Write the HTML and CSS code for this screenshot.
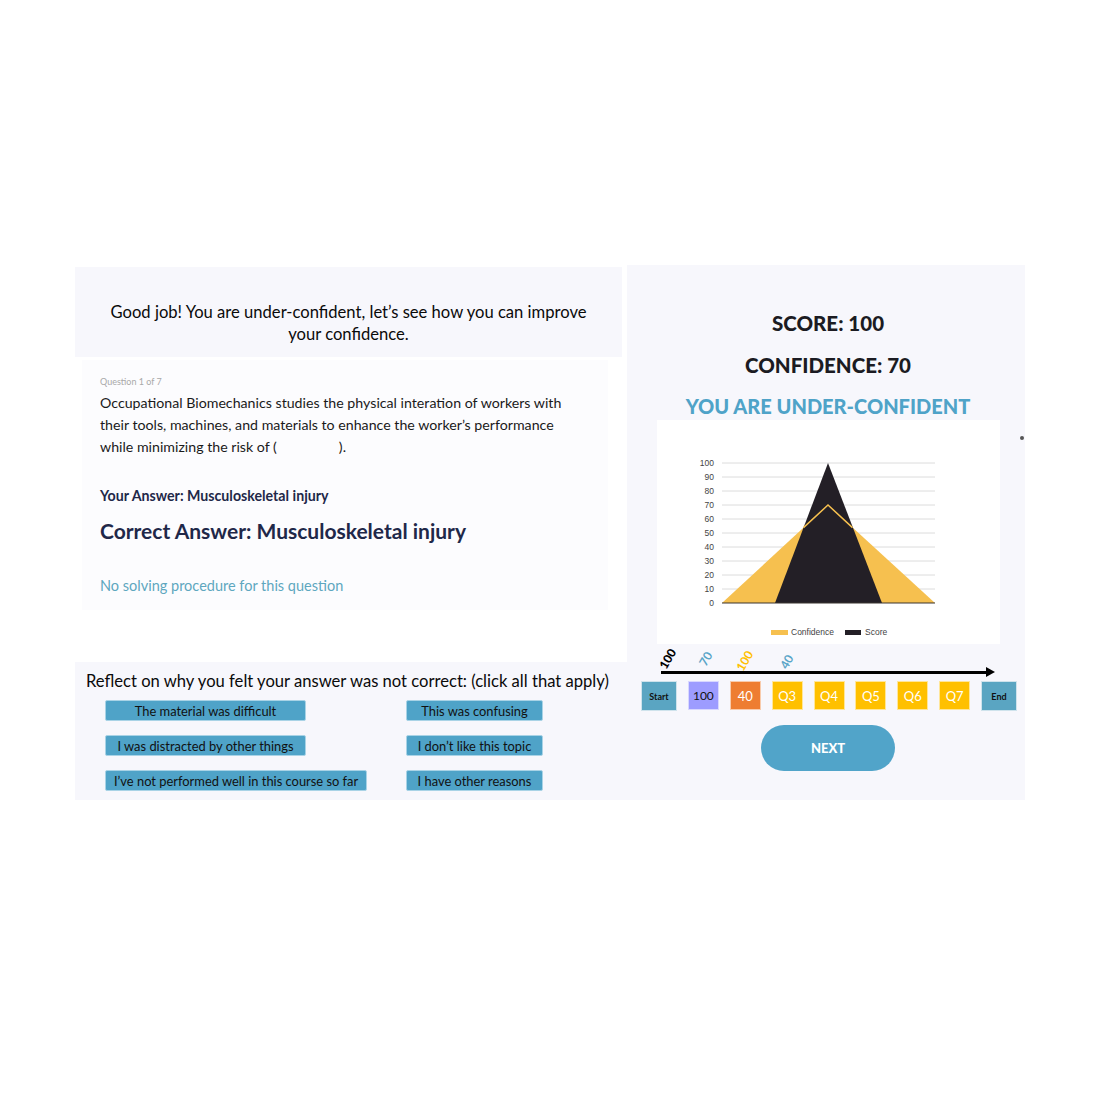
FILE: index.html
```html
<!DOCTYPE html>
<html>
<head>
<meta charset="utf-8">
<link rel="stylesheet" href="styles.css">
</head>
<body>
<div class="stage">
  <div class="left">
    <div class="banner">Good job! You are under-confident, let’s see how you can improve<br>your confidence.</div>
    <div class="qarea">
      <div class="qcard">
        <div class="qnum">Question 1 of 7</div>
        <p class="qtext">Occupational Biomechanics studies the physical interation of workers with<br>their tools, machines, and materials to enhance the worker’s performance<br>while minimizing the risk of (<span class="blank"></span>).</p>
        <div class="your">Your Answer: Musculoskeletal injury</div>
        <div class="correct">Correct Answer: Musculoskeletal injury</div>
        <div class="nosolve">No solving procedure for this question</div>
      </div>
    </div>
    <div class="reflect">
      <div class="reflect-title">Reflect on why you felt your answer was not correct: (click all that apply)</div>
      <div class="reasons">
        <button class="reason c1">The material was difficult</button>
        <button class="reason c2">This was confusing</button>
        <button class="reason c1">I was distracted by other things</button>
        <button class="reason c2">I don’t like this topic</button>
        <button class="reason c1">I’ve not performed well in this course so far</button>
        <button class="reason c2">I have other reasons</button>
      </div>
    </div>
  </div>
  <div class="right">
    <span class="dot"></span>
    <div class="stat">SCORE: 100</div>
    <div class="stat conf">CONFIDENCE: 70</div>
    <div class="verdict">YOU ARE UNDER-CONFIDENT</div>
    <div class="chart">
      <svg width="343" height="224" viewBox="0 0 343 224">
        <g stroke="#dcdcdc" stroke-width="1">
          <line x1="65" y1="43" x2="278" y2="43"/>
          <line x1="65" y1="57" x2="278" y2="57"/>
          <line x1="65" y1="71" x2="278" y2="71"/>
          <line x1="65" y1="85" x2="278" y2="85"/>
          <line x1="65" y1="99" x2="278" y2="99"/>
          <line x1="65" y1="113" x2="278" y2="113"/>
          <line x1="65" y1="127" x2="278" y2="127"/>
          <line x1="65" y1="141" x2="278" y2="141"/>
          <line x1="65" y1="155" x2="278" y2="155"/>
          <line x1="65" y1="169" x2="278" y2="169"/>
        </g>
        <g class="axis" text-anchor="end">
          <text x="57" y="46">100</text>
          <text x="57" y="60">90</text>
          <text x="57" y="74">80</text>
          <text x="57" y="88">70</text>
          <text x="57" y="102">60</text>
          <text x="57" y="116">50</text>
          <text x="57" y="130">40</text>
          <text x="57" y="144">30</text>
          <text x="57" y="158">20</text>
          <text x="57" y="172">10</text>
          <text x="57" y="186">0</text>
        </g>
        <polygon points="65,183 171,85 278,183" fill="#f6c04f"/>
        <polygon points="118,183 171,43 225,183" fill="#231f26"/>
        <polyline points="146.5,107.6 171,85 195.5,107.6" fill="none" stroke="#f6c04f" stroke-width="1.5"/>
        <line x1="65" y1="183" x2="278" y2="183" stroke="#3a3530" stroke-width="1.2"/>
        <rect x="114" y="210" width="17" height="5" fill="#f6c04f"/>
        <text class="legend" x="134" y="215">Confidence</text>
        <rect x="188" y="210" width="16" height="5" fill="#231f26"/>
        <text class="legend" x="208" y="215">Score</text>
      </svg>
    </div>
    <div class="timeline">
      <span class="tl-label bold" style="left:27px;top:15px">100</span>
      <span class="tl-label blue" style="left:65px;top:15px">70</span>
      <span class="tl-label yellow" style="left:104px;top:17px">100</span>
      <span class="tl-label blue" style="left:146px;top:18px">40</span>
      <div class="arrow"></div>
      <div class="steps">
        <div class="step edge">Start</div>
        <div class="step lav">100</div>
        <div class="step orange">40</div>
        <div class="step gold">Q3</div>
        <div class="step gold">Q4</div>
        <div class="step gold">Q5</div>
        <div class="step gold">Q6</div>
        <div class="step gold">Q7</div>
        <div class="step edge">End</div>
      </div>
    </div>
    <button class="next">NEXT</button>
  </div>
</div>
</body>
</html>
```
FILE: styles.css
```css
* { box-sizing: border-box; }
html, body { margin: 0; padding: 0; background: #ffffff; }
body { font-family: "Lato", "Open Sans", sans-serif; color: #111; }

.stage {
  display: flex;
  width: 950px;
  margin: 265px 0 0 75px;
  height: 535px;
}

.left {
  width: 552px;
  display: flex;
  flex-direction: column;
  padding-top: 2px;
}

.banner {
  height: 90px;
  background: #f7f7fc;
  padding: 34px 0 0 0;
  text-align: center;
  font-size: 16.6px;
  line-height: 22px;
  color: #0a0a0a;
  margin-right: 5px;
}

.qarea {
  height: 305px;
  background: #ffffff;
  padding: 3px 19px 0 7px;
}

.qcard {
  background: #fcfcfe;
  height: 250px;
  padding: 16px 0 0 18px;
}

.qnum {
  font-size: 9px;
  line-height: 12px;
  color: #a9a9a9;
}

.qtext {
  margin: 4px 0 0 0;
  font-size: 14.2px;
  line-height: 22px;
  color: #1a1a1a;
}

.blank {
  display: inline-block;
  width: 62px;
}

.your {
  margin-top: 28px;
  font-size: 14.2px;
  font-weight: 700;
  line-height: 20px;
  color: #1f2849;
}

.correct {
  margin-top: 12px;
  font-size: 21px;
  font-weight: 700;
  line-height: 26px;
  color: #1f2849;
}

.nosolve {
  margin-top: 32px;
  font-size: 14.5px;
  line-height: 20px;
  color: #5ea7bf;
}

.reflect {
  flex: 1;
  background: #f7f7fc;
  padding: 9px 0 0 11px;
}

.reflect-title {
  font-size: 16.6px;
  line-height: 20px;
  color: #0a0a0a;
}

.reasons {
  margin-top: 9px;
  display: grid;
  grid-template-columns: 301px auto;
  row-gap: 14px;
  padding-left: 19px;
  justify-items: start;
}

.reason {
  height: 21px;
  padding: 0 8px;
  border: 1px solid #a9d3e6;
  border-radius: 2px;
  background: #4fa3c8;
  color: #111;
  font-family: "Lato", "Open Sans", sans-serif;
  font-size: 12.9px;
  white-space: nowrap;
  cursor: pointer;
}
.reason.c1 { min-width: 201px; }
.reason.c2 { min-width: 137px; }

.right {
  position: relative;
  width: 398px;
  background: #f7f7fc;
  display: flex;
  flex-direction: column;
  align-items: center;
  padding-top: 46px;
}

.dot {
  position: absolute;
  left: 393px;
  top: 171px;
  width: 4px;
  height: 4px;
  border-radius: 50%;
  background: #555;
}

.stat {
  font-size: 20.5px;
  line-height: 24px;
  font-weight: 900;
  color: #1b1b22;
  padding-left: 4px;
}
.stat.conf { margin-top: 18px; }

.verdict {
  margin-top: 17px;
  font-size: 20px;
  line-height: 24px;
  font-weight: 900;
  color: #4fa3c8;
  padding-left: 4px;
}

.chart {
  margin-top: 2px;
  width: 343px;
  height: 224px;
  background: #ffffff;
  margin-left: 4px;
}
.chart svg { display: block; }
.axis text { font-family: "Liberation Sans", Arial, sans-serif; font-size: 8.5px; fill: #444; }
.legend { font-family: "Liberation Sans", Arial, sans-serif; font-size: 8.5px; fill: #444; }

.timeline {
  position: relative;
  align-self: stretch;
  margin: 0 8px 0 14px;
  height: 68px;
  padding-top: 27px;
}

.tl-label {
  position: absolute;
  font-size: 12px;
  line-height: 12px;
  transform: translate(-50%, -50%) rotate(-60deg);
  white-space: nowrap;
}
.tl-label.bold { font-weight: 900; color: #000; }
.tl-label.blue { color: #5aa5c8; font-weight: 700; }
.tl-label.yellow { color: #ffc000; font-weight: 700; }

.arrow {
  position: relative;
  margin-left: 20px;
  width: 326px;
  height: 3px;
  background: #000;
}
.arrow::after {
  content: "";
  position: absolute;
  right: -8px;
  top: -4px;
  border-left: 9px solid #000;
  border-top: 5.5px solid transparent;
  border-bottom: 5.5px solid transparent;
}

.steps {
  margin-top: 7px;
  display: flex;
  justify-content: space-between;
  align-items: flex-start;
}

.step {
  width: 31px;
  height: 29px;
  display: flex;
  align-items: center;
  justify-content: center;
  font-size: 13px;
  color: #fff;
  border: 1px solid rgba(255,255,255,0.6);
}
.step.edge {
  width: 36px;
  height: 30px;
  background: #5aa5c2;
  color: #111;
  font-size: 9px;
  font-weight: 700;
  border: 1px solid #cfe3ec;
}
.step.lav { background: #9d9cff; color: #111; font-size: 12px; }
.step.orange { background: #ee7d31; }
.step.gold { background: #ffc000; }

.next {
  margin-top: 13px;
  width: 134px;
  height: 46px;
  border: none;
  border-radius: 23px;
  background: #51a4c9;
  color: #ffffff;
  font-family: "Lato", "Open Sans", sans-serif;
  font-weight: 900;
  font-size: 13px;
  cursor: pointer;
  margin-left: 4px;
}
```
